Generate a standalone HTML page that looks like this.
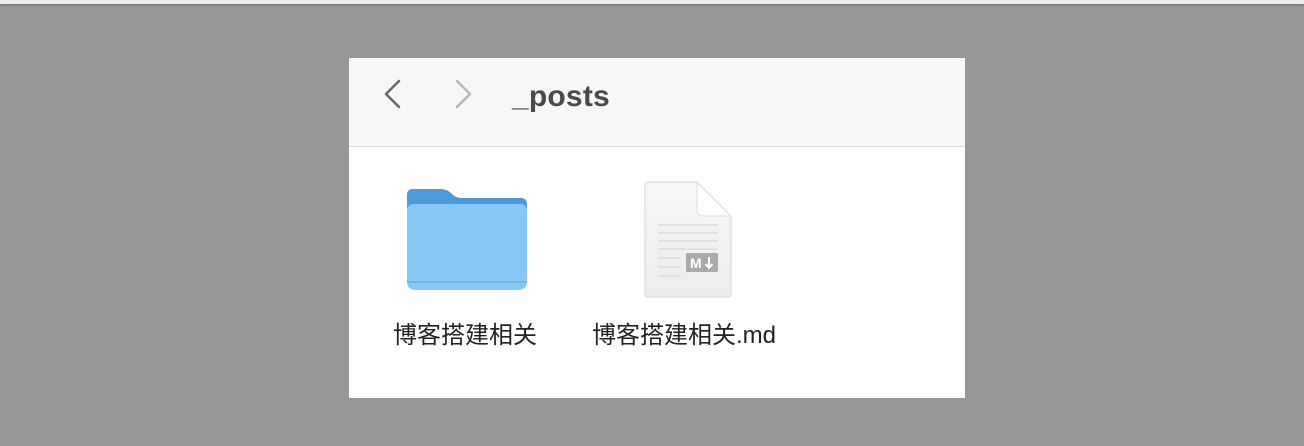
<!DOCTYPE html>
<html><head><meta charset="utf-8"><style>
body{margin:0;width:1304px;height:446px;background:#979797;position:relative;overflow:hidden;font-family:"Liberation Sans","Noto Sans CJK SC",sans-serif}
.top{position:absolute;left:0;top:0;width:1304px;height:4px;background:#ececec;box-shadow:0 1px 2px rgba(0,0,0,.3)}
.panel{position:absolute;left:349px;top:58px;width:616px;height:340px;background:#fff}
.hdr{position:absolute;left:0;top:0;width:616px;height:88px;background:#f7f7f7;border-bottom:1px solid #dcdcdc}
.title{position:absolute;left:163px;top:22px;font-size:30px;font-weight:bold;color:#4a4a4a;letter-spacing:0.2px}
.lbl{position:absolute;top:257px;font-size:24px;color:#222;white-space:nowrap}
</style></head><body>
<div class="top"></div>
<div class="panel">
<div class="hdr">
<svg style="position:absolute;left:30px;top:18px" width="30" height="36"><path d="M20 5 L7 18 L20 31" fill="none" stroke="#6a6a6a" stroke-width="2.6" stroke-linecap="round" stroke-linejoin="round"/></svg>
<svg style="position:absolute;left:100px;top:18px" width="30" height="36"><path d="M8 5 L21 18 L8 31" fill="none" stroke="#b9b9b9" stroke-width="2.6" stroke-linecap="round" stroke-linejoin="round"/></svg>
<div class="title">_posts</div>
</div>
<svg style="position:absolute;left:58px;top:131px" width="120" height="102">
<path d="M0 6 Q0 0 6 0 H34 Q40 0 45 5 Q49 9 55 9 H114 Q120 9 120 15 V94 H0 Z" fill="#4e9ad8"/>
<path d="M0 22 Q0 15 7 15 H113 Q120 15 120 22 V92 Q120 101 111 101 H9 Q0 101 0 92 Z" fill="#86c8f6"/>
<rect x="0" y="92" width="120" height="2" fill="#74b4e6"/>
</svg>
<svg style="position:absolute;left:294px;top:123px" width="90" height="118">
<defs><linearGradient id="g" x1="0" y1="0" x2="0" y2="1"><stop offset="0" stop-color="#f7f7f7"/><stop offset="1" stop-color="#ececec"/></linearGradient></defs>
<path d="M2 4 Q2 1 5 1 H54 L88 35 V113 Q88 116 85 116 H5 Q2 116 2 113 Z" fill="url(#g)" stroke="#d6d6d6" stroke-width="1"/>
<path d="M54 1 V28 Q54 35 61 35 H88 Z" fill="#fff" stroke="#ddd" stroke-width="1"/>
<g stroke="#e2e2e2" stroke-width="2"><line x1="15" y1="44" x2="75" y2="44"/><line x1="15" y1="52" x2="75" y2="52"/><line x1="15" y1="60" x2="75" y2="60"/><line x1="15" y1="68" x2="75" y2="68"/><line x1="15" y1="77" x2="38" y2="77"/><line x1="15" y1="86" x2="38" y2="86"/><line x1="15" y1="95" x2="38" y2="95"/></g>
<rect x="43" y="72" width="32" height="19" rx="1.5" fill="#a9a9a9"/>
<text x="47" y="87" font-family="Liberation Sans" font-weight="bold" font-size="14" fill="#fff">M</text>
<path d="M66 76 V87 M62.5 83 L66 87 L69.5 83" stroke="#fff" stroke-width="2" fill="none"/>
</svg>
<div class="lbl" style="left:44px">博客搭建相关</div>
<div class="lbl" style="left:243px">博客搭建相关.md</div>
</div>
</body></html>
